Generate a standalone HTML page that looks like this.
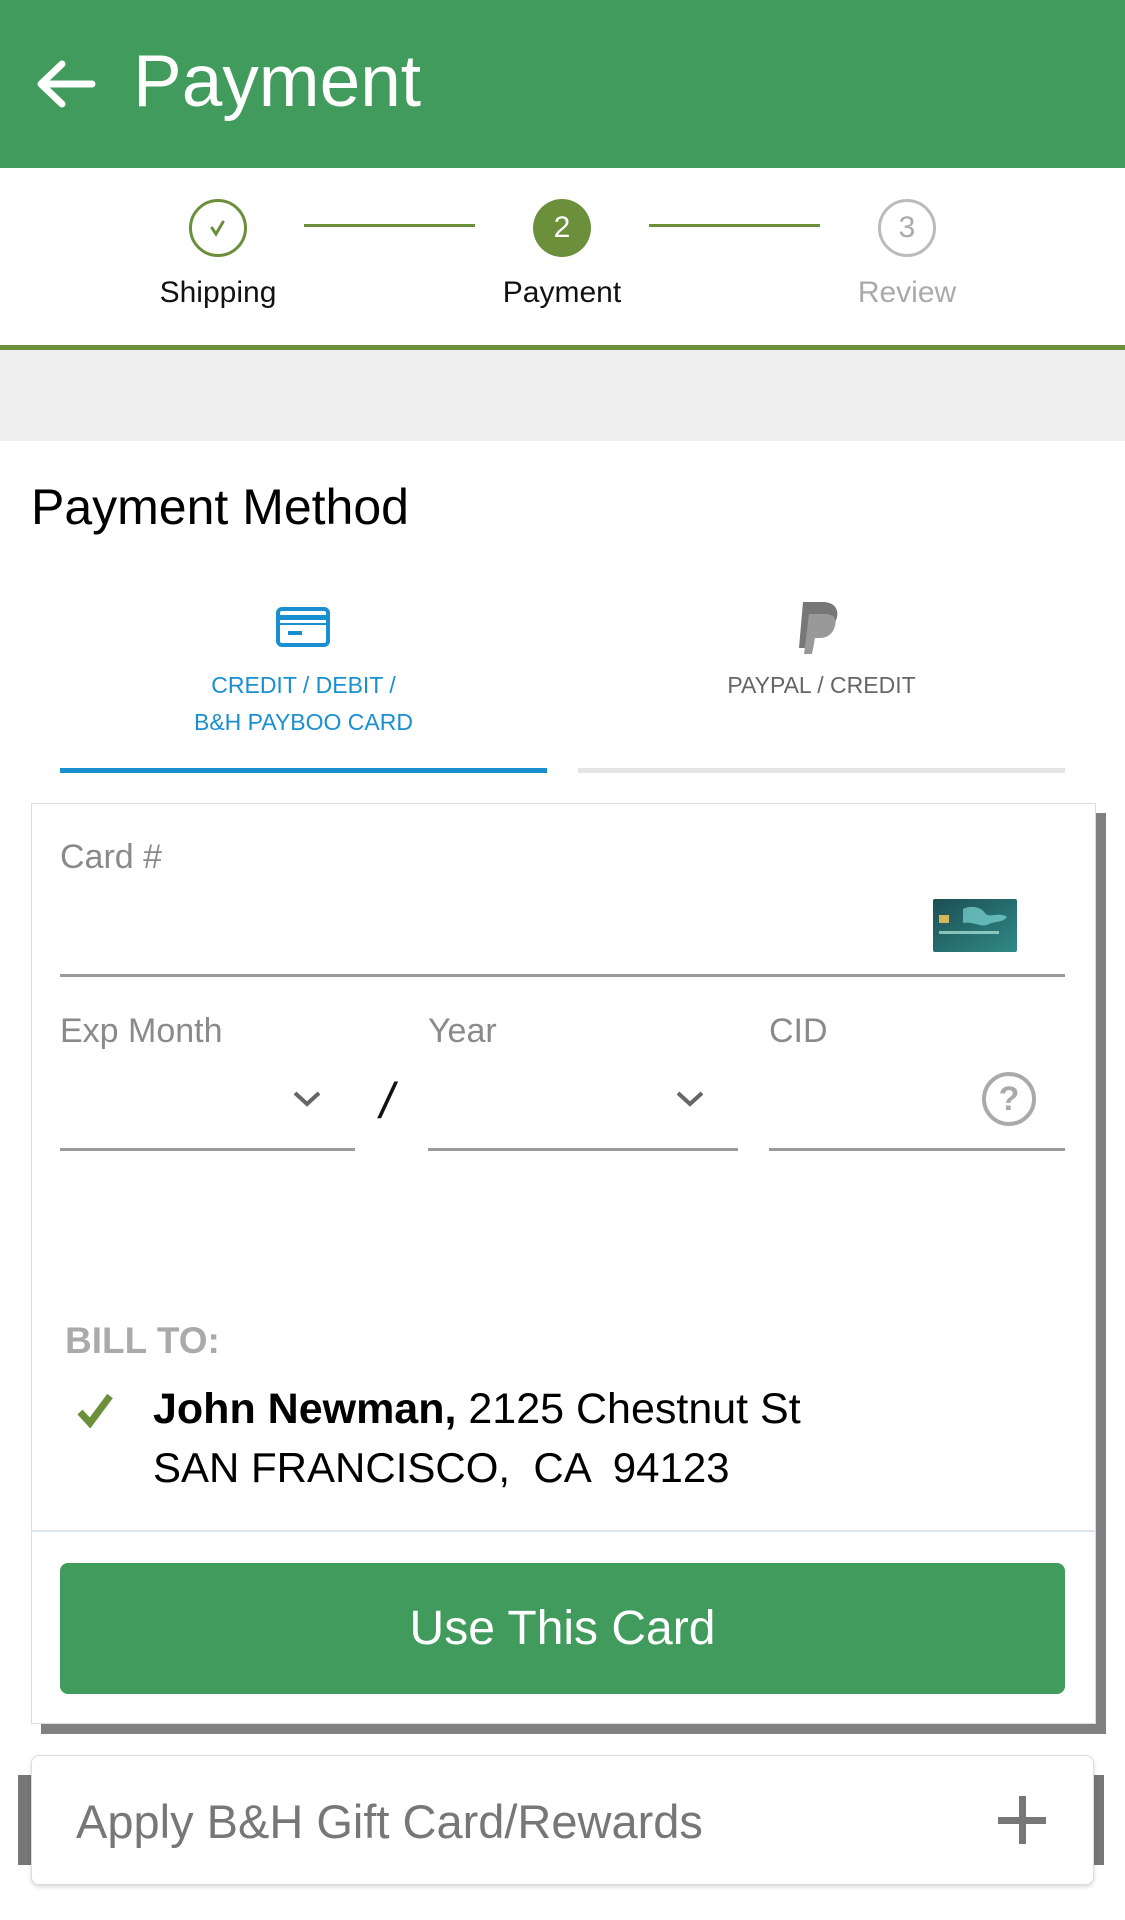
<!DOCTYPE html>
<html><head><meta charset="utf-8"><style>
*{margin:0;padding:0;box-sizing:border-box}
body{width:1125px;height:1920px;background:#fff;font-family:"Liberation Sans",sans-serif;position:relative;overflow:hidden}
.a{position:absolute}
.lab{color:#8a8a8a;font-size:34px}
.ul{height:3px;background:#9a9a9a}
</style></head><body>
<div class="a" style="left:0;top:0;width:1125px;height:168px;background:#419b5c"></div>
<svg class="a" style="left:34px;top:60px" width="64" height="48" viewBox="0 0 64 48"><path d="M58 24H8M28 4L7 24l21 20" stroke="#fff" stroke-width="7" fill="none" stroke-linecap="round" stroke-linejoin="round"/></svg>
<div class="a" style="left:133px;top:40px;font-size:73px;color:#fff">Payment</div>

<div class="a" style="left:189px;top:199px;width:58px;height:58px;border:3px solid #6c8f3c;border-radius:50%"></div>
<svg class="a" style="left:207px;top:217px" width="22" height="22" viewBox="0 0 22 22"><path d="M5 11l4 6 7-12" stroke="#6c8f3c" stroke-width="3" fill="none" stroke-linecap="round"/></svg>
<div class="a" style="left:304px;top:224px;width:171px;height:3px;background:#6c8f3c"></div>
<div class="a" style="left:533px;top:199px;width:58px;height:58px;background:#6c8f3c;border-radius:50%;color:#fff;font-size:30px;text-align:center;line-height:58px">2</div>
<div class="a" style="left:649px;top:224px;width:171px;height:3px;background:#6c8f3c"></div>
<div class="a" style="left:878px;top:199px;width:58px;height:58px;border:3px solid #bbb;border-radius:50%;color:#aaa;font-size:30px;text-align:center;line-height:52px">3</div>
<div class="a" style="left:118px;top:276px;width:200px;text-align:center;font-size:30px;color:#111">Shipping</div>
<div class="a" style="left:462px;top:276px;width:200px;text-align:center;font-size:30px;color:#111">Payment</div>
<div class="a" style="left:807px;top:276px;width:200px;text-align:center;font-size:30px;color:#aaa">Review</div>
<div class="a" style="left:0;top:345px;width:1125px;height:5px;background:#6c8f3c"></div>
<div class="a" style="left:0;top:350px;width:1125px;height:91px;background:#efefef"></div>

<div class="a" style="left:31px;top:478px;font-size:50px;color:#000">Payment Method</div>

<svg class="a" style="left:276px;top:607px" width="54" height="40" viewBox="0 0 54 40"><rect x="2" y="2" width="50" height="36" rx="4" fill="#fff" stroke="#1a8fd0" stroke-width="4"/><rect x="2" y="8" width="50" height="5" fill="#1a8fd0"/><rect x="2" y="16" width="50" height="2" fill="#1a8fd0"/><rect x="12" y="24" width="14" height="4" fill="#1a8fd0"/></svg>
<svg class="a" style="left:797px;top:600px" width="44" height="56" viewBox="0 0 44 56"><path d="M6 2h20c10 0 16 6 14 15-2 9-9 13-17 13h-6l-4 18H2z" fill="#777"/><path d="M12 14h16c8 0 12 4 10 12-2 8-8 12-15 12h-5l-3 16H7z" fill="#999"/></svg>
<div class="a" style="left:60px;top:667px;width:487px;text-align:center;font-size:23px;color:#1a8fd0;line-height:37px">CREDIT / DEBIT /<br>B&amp;H PAYBOO CARD</div>
<div class="a" style="left:578px;top:667px;width:487px;text-align:center;font-size:23px;color:#666;line-height:37px">PAYPAL / CREDIT</div>
<div class="a" style="left:60px;top:768px;width:487px;height:5px;background:#1a8fd0"></div>
<div class="a" style="left:578px;top:768px;width:487px;height:5px;background:#e5e5e5"></div>

<div class="a" style="left:41px;top:813px;width:1065px;height:921px;background:#808080"></div>
<div class="a" style="left:31px;top:803px;width:1065px;height:921px;background:#fff;border:1px solid #ddd"></div>
<div class="a lab" style="left:60px;top:838px">Card #</div>
<svg class="a" style="left:933px;top:899px" width="84" height="53" viewBox="0 0 84 53"><defs><linearGradient id="g" x1="0" y1="0" x2="1" y2="1"><stop offset="0" stop-color="#1d4e55"/><stop offset="1" stop-color="#2f8a86"/></linearGradient></defs><rect width="84" height="53" rx="2" fill="url(#g)"/><path d="M30 10c8-4 18-2 22 4s14-2 22 4c-4 6-14 4-20 8-8 2-14-4-24-2z" fill="#7fd6d6" opacity=".7"/><rect x="6" y="16" width="10" height="8" fill="#d8b65a"/><rect x="6" y="32" width="60" height="3" fill="#cfe" opacity=".6"/></svg>
<div class="a ul" style="left:60px;top:974px;width:1005px"></div>

<div class="a lab" style="left:60px;top:1012px">Exp Month</div>
<div class="a lab" style="left:428px;top:1012px">Year</div>
<div class="a lab" style="left:769px;top:1012px">CID</div>
<svg class="a" style="left:292px;top:1090px" width="30" height="18" viewBox="0 0 30 18"><path d="M3 3l12 11 12-11" stroke="#666" stroke-width="4" fill="none"/></svg>
<svg class="a" style="left:675px;top:1090px" width="30" height="18" viewBox="0 0 30 18"><path d="M3 3l12 11 12-11" stroke="#666" stroke-width="4" fill="none"/></svg>
<div class="a" style="left:380px;top:1072px;font-size:50px;color:#111;font-style:italic">/</div>
<div class="a" style="left:982px;top:1072px;width:54px;height:54px;border:4px solid #aaa;border-radius:50%;color:#aaa;font-size:34px;font-weight:bold;text-align:center;line-height:46px">?</div>
<div class="a ul" style="left:60px;top:1148px;width:295px"></div>
<div class="a ul" style="left:428px;top:1148px;width:310px"></div>
<div class="a ul" style="left:769px;top:1148px;width:296px"></div>

<div class="a" style="left:65px;top:1320px;font-size:37px;font-weight:bold;color:#aaa">BILL TO:</div>
<svg class="a" style="left:76px;top:1392px" width="38" height="36" viewBox="0 0 38 36"><path d="M4 20l10 11L34 4" stroke="#6c8f3c" stroke-width="7" fill="none"/></svg>
<div class="a" style="left:153px;top:1385px;font-size:43px;color:#000;white-space:nowrap"><b>John Newman,</b> 2125 Chestnut St</div>
<div class="a" style="left:153px;top:1444px;font-size:42px;color:#000;white-space:pre">SAN FRANCISCO,  CA  94123</div>
<div class="a" style="left:31px;top:1530px;width:1064px;height:2px;background:#dde6ee"></div>
<div class="a" style="left:60px;top:1563px;width:1005px;height:131px;background:#419b5c;border-radius:8px;color:#fff;font-size:48px;text-align:center;line-height:131px">Use This Card</div>

<div class="a" style="left:18px;top:1775px;width:14px;height:90px;background:#777"></div>
<div class="a" style="left:1090px;top:1775px;width:14px;height:90px;background:#777"></div>
<div class="a" style="left:31px;top:1755px;width:1063px;height:130px;background:#fff;border:1px solid #ddd;border-radius:8px;box-shadow:0 2px 4px rgba(0,0,0,.15)"></div>
<div class="a" style="left:76px;top:1794px;font-size:47px;color:#777">Apply B&amp;H Gift Card/Rewards</div>
<div class="a" style="left:998px;top:1817px;width:48px;height:7px;background:#777"></div>
<div class="a" style="left:1019px;top:1796px;width:7px;height:48px;background:#777"></div>
</body></html>
